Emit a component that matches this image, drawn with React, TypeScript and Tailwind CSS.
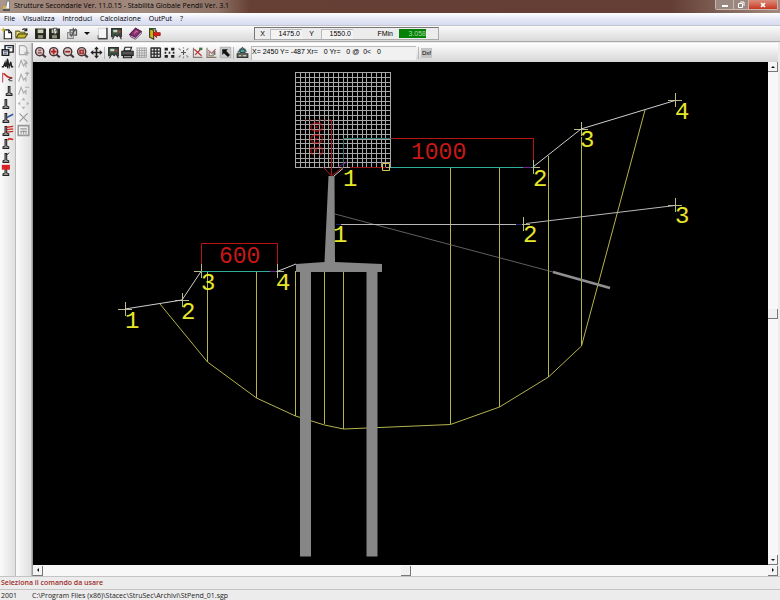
import type { ReactNode } from 'react';

type Tool = { label: string; icon: ReactNode };

const Icon = ({ children }: { children: ReactNode }) => (
  <svg viewBox="0 0 16 16" className="h-[13px] w-[13px] shrink-0" fill="none" stroke="#222" strokeWidth="1.4">
    {children}
  </svg>
);

const ToolButton = ({ tool }: { tool: Tool }) => (
  <button type="button" title={tool.label} aria-label={tool.label} className="flex h-3.5 w-3.5 shrink-0 items-center justify-center">
    <Icon>{tool.icon}</Icon>
  </button>
);

const lens = (color: string, inner: ReactNode) => (
  <>
    <circle cx="7" cy="7" r="5" fill="#d9cfcf" stroke="#4a3438" strokeWidth="1.8" />
    <path d="M10.5 10.5L14.5 14" stroke="#4a3438" strokeWidth="2.6" />
    <g stroke={color} strokeWidth="2.2">{inner}</g>
  </>
);

const disk = (
  <>
    <path d="M2 2.5H14V14H2Z" fill="#26281c" stroke="#26281c" />
    <path d="M4.5 3H11.5V7.5H4.5Z" fill="#c9cdb8" stroke="none" />
    <path d="M5 10H11V14H5Z" fill="#8d9080" stroke="none" />
  </>
);

const camera = (
  <>
    <path d="M2 2H14V12H2Z" fill="#3f5443" stroke="#303030" />
    <path d="M4 3.5H9V6.5H4Z" fill="#c5d7c5" stroke="none" />
    <path d="M10 4.5H13V7H10Z" fill="#b04038" stroke="none" />
    <path d="M3 15L6 9.5L9 12L11 9.5L14 15" stroke="#333" fill="#e7e7e7" />
  </>
);

// retaining wall pictogram shared by the left toolbar
const wall = (
  <path d="M5 3H7V11L9.5 12V14H2.5V12L5 11Z" fill="#b8b8b8" stroke="#222" strokeWidth="1.3" />
);

const fileTools: Tool[] = [
  {
    label: 'Nuovo',
    icon: (
      <>
        <path d="M4 3.5H9.5L13 7V14.5H4Z" fill="#fff" />
        <path d="M9.5 3.5V7H13" />
        <path d="M3 1V6M.5 3.5H5.5" stroke="#c9b13a" />
      </>
    ),
  },
  {
    label: 'Apri',
    icon: (
      <>
        <path d="M1 13V5H5L6.5 6.5H12V9" fill="#e9e08a" stroke="#69621d" />
        <path d="M1.5 13.5L4.5 8.5H15.5L12 13.5Z" fill="#c4b82f" stroke="#4f4a14" />
        <path d="M9 3.5C11 1.5 13 2 14 4M14.5 1.5V4.5H11.5" />
      </>
    ),
  },
];

const saveTools: Tool[] = [
  { label: 'Salva', icon: disk },
  {
    label: 'Salva con nome',
    icon: (
      <>
        {disk}
        <path d="M6.5 1.5H11L9.5 5H12.5L8 10Z" fill="#eee" stroke="#333" strokeWidth="1" />
      </>
    ),
  },
];

const exportTools: Tool[] = [
  {
    label: 'Foglio',
    icon: (
      <>
        <path d="M3 1.5H13V14H3Z" fill="#f5f5f5" stroke="#d5d5d5" />
        <path d="M13.5 1V14.5H2.5" stroke="#444" strokeWidth="1.8" />
        <path d="M2.5 10V14.5" stroke="#777" />
      </>
    ),
  },
  { label: 'Cattura', icon: camera },
];

const book: Tool = {
  label: 'Guida',
  icon: (
    <>
      <path d="M1 9L8 1.5L15 5.5L8 13Z" fill="#8e2f7c" stroke="#541b4c" />
      <path d="M1 9.5L2 12L8 15L15 8V5.5L8 12.8Z" fill="#e8dce6" stroke="#541b4c" strokeWidth="1" />
      <path d="M6.5 8L9 5L10.5 6" stroke="#e7bb55" strokeWidth="1" />
    </>
  ),
};

const exit: Tool = {
  label: 'Esci',
  icon: (
    <>
      <path d="M2 2L7 4V15L2 12.5Z" fill="#c7b91f" stroke="#3c3a1c" />
      <path d="M2 2H9V5" stroke="#2d5a2d" />
      <path d="M6 8.5L10.5 4.5V7H15V10.5H10.5V13Z" fill="#dc2018" stroke="#8d1610" strokeWidth="1" />
    </>
  ),
};

const zoomTools: Tool[] = [
  { label: 'Zoom finestra', icon: lens('#a06060', <path d="M4.5 8.5H9.5M5 5.5H9" />) },
  { label: 'Zoom avanti', icon: lens('#c01818', <path d="M3.5 7H10.5M7 3.5V10.5" />) },
  { label: 'Zoom indietro', icon: lens('#a32525', <path d="M4 7H10" />) },
  { label: 'Zoom tutto', icon: lens('#a33', <path d="M5 5.5H9V9H5Z" />) },
];

const pan: Tool = {
  label: 'Sposta vista',
  icon: (
    <>
      <path d="M8 3V13M3 8H13" strokeWidth="2" />
      <path d="M8 .5L11 4H5ZM8 15.5L5 12H11ZM.5 8L4 5V11ZM15.5 8L12 11V5Z" fill="#222" stroke="none" />
    </>
  ),
};

const viewTools: Tool[] = [
  { label: 'Salva immagine', icon: camera },
  {
    label: 'Stampa',
    icon: (
      <>
        <path d="M5 1.5H13L11.5 6H3.5Z" fill="#eee" />
        <path d="M1 6.5H15V11.5H1Z" fill="#555" />
        <path d="M3 11.5H13V14.5H3Z" fill="#999" />
      </>
    ),
  },
  {
    label: 'Griglia',
    icon: <path d="M2 2.5H14M2 5.5H14M2 8.5H14M2 11.5H14M2.5 2V14M5.5 2V14M8.5 2V14M11.5 2V14M14 2V14M2 14H14" stroke="#9a9a9a" strokeWidth="1" />,
  },
  {
    label: 'Griglia attiva',
    icon: <path d="M2 2.5H14M2 6.3H14M2 10H14M2 14H14M2.5 2V14M6.3 2V14M10 2V14M14 2V14" stroke="#2b2b2b" strokeWidth="1.7" />,
  },
  {
    label: 'Snap',
    icon: (
      <>
        <path d="M2 2H6V5.5H2ZM10 2H14V5.5H10ZM2 11H6V14.5H2ZM10 11H14V14.5H10Z" fill="#222" stroke="none" />
        <path d="M2 7H4V9.5H2ZM7 7H9V9.5H7ZM12 7H14V9.5H12Z" fill="#222" stroke="none" />
      </>
    ),
  },
  {
    label: 'Punto',
    icon: (
      <>
        <path d="M8 5V11M5 8H11" stroke="#555" />
        <path d="M2 3L4.5 5.5M14 3L11.5 5.5M2 14L4.5 11.5M14 14L11.5 11.5M8 1.5V3M8 13V15" stroke="#888" />
      </>
    ),
  },
  {
    label: 'Assi',
    icon: (
      <>
        <path d="M3 2V14H14" stroke="#8a7a7a" />
        <path d="M4 4L13 12M12 4L5 11" stroke="#b33" />
        <path d="M10 2H14V5H10Z" fill="#387a3e" stroke="none" />
      </>
    ),
  },
  {
    label: 'Quote',
    icon: (
      <>
        <path d="M2.5 2V14H14M5 7V12H10V7" stroke="#887a66" />
        <path d="M4 5L8 9L13 4" stroke="#a66" />
        <path d="M12 6V11" stroke="#555" />
      </>
    ),
  },
  {
    label: 'Seleziona',
    icon: (
      <>
        <path d="M1.5 1.5H14.5V14.5H1.5Z" fill="#c9c9c9" stroke="#aaa" strokeWidth="1" />
        <path d="M4 4H11L9 6L13.5 11L11 13.5L6 9L4 11Z" fill="#111" stroke="none" />
      </>
    ),
  },
];

const world: Tool = {
  label: 'Coordinate',
  icon: (
    <>
      <path d="M2 8L8 2L13 7" stroke="#456" />
      <path d="M5 4H11V8H5Z" fill="#55a090" stroke="#264d50" />
      <path d="M1.5 9.5H14.5V14H1.5Z" fill="#776" stroke="#333" />
      <path d="M4 12H6M9 12H12" stroke="#eee" />
    </>
  ),
};

const wallTools: Tool[] = [
  {
    label: 'Proprietà',
    icon: (
      <>
        <path d="M5 2H15V10H5Z" fill="#fff" strokeWidth="1.8" />
        <path d="M1.5 7H9.5V14H1.5Z" fill="#ddd" strokeWidth="1.8" />
        <path d="M3.5 9.5H8M3.5 12H7M8 4.5H13" stroke="#3b5980" />
      </>
    ),
  },
  {
    label: 'Profilo terreno',
    icon: (
      <>
        <path d="M1 12H3L5 7L6 12L8 3L10 12L12 6L13 12H15" strokeWidth="1.8" />
        <path d="M8 2V14" />
      </>
    ),
  },
  {
    label: 'Strati',
    icon: (
      <>
        <path d="M3 3L8 7L14 9" stroke="#c92a20" strokeWidth="2" />
        <path d="M2 2V14" stroke="#b56" />
        <path d="M9 11L13 8M10 12L14 12" stroke="#444" />
      </>
    ),
  },
  { label: 'Muro con pali', icon: <g transform="translate(4 0)">{wall}</g> },
  { label: 'Muro', icon: wall },
  {
    label: 'Falda',
    icon: (
      <>
        {wall}
        <path d="M7 8L15 4" stroke="#3557a3" strokeWidth="1.8" />
      </>
    ),
  },
  {
    label: 'Carichi',
    icon: (
      <>
        {wall}
        <path d="M7 4L15 3M7 7L15 6M7 10L15 9" stroke="#cb2a22" strokeWidth="1.6" />
      </>
    ),
  },
  {
    label: 'Tiranti',
    icon: (
      <>
        {wall}
        <path d="M8 4L10 2L15 3" stroke="#d22a22" strokeWidth="2" />
      </>
    ),
  },
  {
    label: 'Punti',
    icon: (
      <>
        {wall}
        <path d="M7 5L10 2" strokeWidth="1.2" />
      </>
    ),
  },
  {
    label: 'Sovraccarico',
    icon: (
      <>
        {wall}
        <path d="M1 1H11V7H1Z" fill="#dc2026" stroke="none" />
      </>
    ),
  },
];

const editTools: Tool[] = [
  {
    label: 'Aggiungi',
    icon: (
      <g stroke="#aaa">
        <path d="M3 2H9L12 5V13H3Z" />
        <path d="M9 11H15M12 8V14" strokeWidth="2" />
      </g>
    ),
  },
  { label: 'Modifica nodo', icon: <path d="M2 13L5 4L8 11L11 6V13M8 3L13 8" stroke="#aaa" /> },
  { label: 'Inserisci nodo', icon: <path d="M2 13L5 4L8 11L11 8V13M10 3H15M12.5 1V6" stroke="#aaa" /> },
  { label: 'Elimina nodo', icon: <path d="M2 13L5 4L8 11L11 8V13M10 4H15" stroke="#aaa" /> },
  {
    label: 'Muovi',
    icon: <path d="M8 1L10.5 4H5.5ZM8 15L5.5 12H10.5ZM1 8L4 5.5V10.5ZM15 8L12 10.5V5.5Z" fill="#b3b3b3" stroke="none" />,
  },
  { label: 'Cancella', icon: <path d="M3 3L13 13M13 3L3 13" stroke="#999" /> },
  {
    label: 'Tabella',
    icon: (
      <g stroke="#999">
        <path d="M1.5 2H14.5V14H1.5Z" strokeWidth="2" />
        <path d="M4 6H12M4 9H12M5 12V9M8 12V8M11 12V9" />
      </g>
    ),
  },
];

const Separator = () => <div className="h-3 w-px shrink-0 bg-[#b5b5b5]" />;

const menu = ['File', 'Visualizza', 'Introduci', 'Calcolazione', 'OutPut', '?'];

const TitleBar = () => (
  <header className="flex h-[13px] shrink-0 items-start justify-between bg-[linear-gradient(90deg,#aa968b_0%,#96786c_10%,#a28c80_18%,#8d7164_28%,#664035_32%,#643e34_86%,#86695f_94%,#a58a80_100%)]">
    <div className="flex h-3 items-center gap-0.5 pl-0.5">
      <svg viewBox="0 0 10 12" className="h-3 w-2.5">
        <path d="M1 9H8V11H1Z" fill="#555" />
        <path d="M5 1H7.5V9H3.5Z" fill="#f4f4f4" stroke="#666" strokeWidth=".7" />
        <path d="M1 6H4V9H1Z" fill="#d3b247" />
      </svg>
      <h1 className="text-[7px] leading-3 whitespace-nowrap text-black">
        Strutture Secondarie Ver. 11.0.15 - Stabilità Globale Pendii Ver. 3.1
      </h1>
    </div>
    <div className="mr-0.5 flex h-2.5 overflow-hidden rounded-b-xs border border-t-0 border-[#c9b7b0]">
      <button type="button" aria-label="Riduci a icona" className="flex w-[18px] items-end justify-center border-r border-[#c9b7b0] bg-[#9a8880] pb-0.5">
        <span className="h-0.5 w-1.5 bg-white" />
      </button>
      <button type="button" aria-label="Ripristina" className="flex w-[15px] items-center justify-center border-r border-[#c9b7b0] bg-[#9a8880]">
        <svg viewBox="0 0 8 8" className="h-2 w-2" fill="none" stroke="#fff">
          <path d="M1.5 2.5H5.5V6.5H1.5ZM3 1H7V5" />
        </svg>
      </button>
      <button type="button" aria-label="Chiudi" className="flex w-[28px] items-center justify-center bg-linear-to-b from-[#d98b7b] to-[#c8341c]">
        <svg viewBox="0 0 8 8" className="h-2 w-2" stroke="#fff" strokeWidth="1.6">
          <path d="M2 2L6 6M6 2L2 6" />
        </svg>
      </button>
    </div>
  </header>
);

const MenuBar = () => (
  <nav className="flex h-[13px] shrink-0 items-center gap-2 border-b border-[#c3c3c8] bg-linear-to-b from-white via-[#e4e7f5] to-[#d7dcf1] pl-1 text-[7px] leading-3 text-black">
    {menu.map((item) => (
      <button key={item} type="button">{item}</button>
    ))}
  </nav>
);

const Readout = () => (
  <div className="flex h-[13px] w-[185px] shrink-0 items-center border border-[#aaa] border-t-[#777] border-l-[#777] bg-[#ececec] font-['Liberation_Sans',sans-serif] text-[7px] leading-[10px]">
    <label htmlFor="coord-x" className="w-[15px] text-center">X</label>
    <input id="coord-x" readOnly value="1475.0" className="h-2.5 w-8 border-t border-l border-[#bbb] bg-[#f3f3f3] pr-0.5 text-right" />
    <label htmlFor="coord-y" className="w-[19px] text-center">Y</label>
    <input id="coord-y" readOnly value="1550.0" className="h-2.5 w-8 border-t border-l border-[#bbb] bg-[#f3f3f3] pr-0.5 text-right" />
    <label htmlFor="fmin" className="w-[46px] pr-1.5 text-right">FMin</label>
    <input id="fmin" readOnly value="3.058" className="h-[9px] w-[27px] bg-[#058205] text-right text-[#a8dca8]" />
  </div>
);

const FileToolbar = () => (
  <div className="flex h-4 shrink-0 items-center border-b border-[#a9a9a9] bg-linear-to-b from-[#fafafa] to-[#dadada]">
    <div className="flex w-[254px] shrink-0 items-center gap-[5px]">
      <div className="flex">{fileTools.map((t) => <ToolButton key={t.label} tool={t} />)}</div>
      <div className="flex">{saveTools.map((t) => <ToolButton key={t.label} tool={t} />)}</div>
      <button type="button" aria-label="Opzioni" className="flex w-6 items-center justify-between">
        <Icon>
          <path d="M5 3.5H13V10H5Z" fill="#ccc" stroke="#555" />
          <path d="M2 7H9V14H2Z" stroke="#888" />
          <path d="M9 1V9M12 2L6 12" stroke="#555" />
        </Icon>
        <svg viewBox="0 0 6 3" className="h-[3px] w-1.5"><path d="M0 0H6L3 3Z" fill="#111" /></svg>
      </button>
      <div className="flex">{exportTools.map((t) => <ToolButton key={t.label} tool={t} />)}</div>
      <ToolButton tool={book} />
      <ToolButton tool={exit} />
    </div>
    <Readout />
  </div>
);

const ViewToolbar = () => (
  <div className="flex h-[19px] shrink-0 items-center bg-linear-to-b from-white to-[#d6d6d6]">
    <div className="flex items-center">
      {zoomTools.map((t) => <ToolButton key={t.label} tool={t} />)}
      <ToolButton tool={pan} />
      <div className="mx-px flex"><Separator /></div>
      {viewTools.map((t) => <ToolButton key={t.label} tool={t} />)}
      <div className="mx-px flex"><Separator /></div>
      <ToolButton tool={world} />
    </div>
    <output className="ml-0.5 h-3.5 w-[165px] shrink-0 border-t border-l border-[#bbb] bg-[#f1f1f1] font-['Liberation_Sans',sans-serif] text-[7px] leading-[9px] whitespace-pre">
      {'X= 2450 Y= -487 Xr=   0 Yr=   0 @  0<   0'}
    </output>
    <div className="mx-0.5 flex"><Separator /></div>
    <button type="button" className="h-2.5 w-[11px] bg-[#c4c4c4] font-['Liberation_Sans',sans-serif] text-[6px] leading-[10px] text-black">Dxf</button>
  </div>
);

const SideToolbar = ({ tools }: { tools: Tool[] }) => (
  <div className="flex w-4 shrink-0 flex-col items-center border-r border-[#bcbcbc] bg-linear-to-r from-[#fbfbfb] to-[#e0e0e0] pt-px">
    {tools.map((t) => (
      <div key={t.label} className="flex h-[13px] items-center nth-[3n]:h-3.5">
        <ToolButton tool={t} />
      </div>
    ))}
  </div>
);

const crosses = [
  [533, 167], [581, 129], [675, 100], [523, 224], [675, 205],
  [125, 309], [182, 300], [201, 271], [277, 271],
];

const nodeLabels: [string, number, number][] = [
  ['1', 343, 186], ['2', 533, 186], ['3', 580, 147], ['4', 675, 119],
  ['1', 333, 242], ['2', 523, 242], ['3', 675, 223],
  ['1', 125, 328], ['2', 181, 319], ['3', 201, 290], ['4', 276, 290],
];

const slices = [
  [207, 271, 362], [256, 271, 398], [295, 271, 416], [324, 271, 424], [343, 271, 429],
  [450, 167, 424], [499, 167, 407], [548, 156, 377], [581, 137, 346],
];

const gridSteps = Array.from({ length: 21 }, (_, i) => Math.round(i * 4.75));

const SlopeDrawing = () => (
  <svg viewBox="33 62 735 503" preserveAspectRatio="xMinYMin meet" className="h-full w-full" fill="none">
    {/* Slip surface */}
    <g stroke="#b4b44e">
      {slices.map(([x, top, bottom]) => (
        <path key={x} d={`M${x + 0.5} ${top}V${bottom}`} />
      ))}
      <path d="M160 304L207.5 362L256.5 398L295.5 416L324.5 425L343.5 429L450.5 424.5L499.5 407L548.5 377L581.5 346L645 110" />
    </g>

    {/* Wall, cap and piles */}
    <path d="M328.5 176H334.5L335 262L382 264V272H377.5V556.5H366.5V272H311V556.5H300V272H296V264L324.5 262Z" fill="#868686" />

    {/* Tie rod */}
    <path d="M335 214L553 272" stroke="#777" strokeWidth=".8" />
    <path d="M553 272L610 288" stroke="#909090" strokeWidth="2.5" />

    {/* Surcharges */}
    <path d="M391 138.5H533.5V160M201.5 265V243.5H277.5V265" stroke="#b81414" />
    <path d="M533.5 160V167M201.5 265V271M277.5 265V271" stroke="#1d7a2c" />

    <g stroke="#bcb98a">
      {crosses.map(([x, y]) => (
        <path key={`${x}-${y}`} d={`M${x - 7} ${y + 0.5}H${x + 7}M${x + 0.5} ${y - 7}V${y + 7}`} />
      ))}
    </g>

    {/* Ground profiles */}
    <path d="M533 167L581 129L675 100.5M125 309L182 300L201 271.5M277 271.5L296 264M334 176L343 168.5" stroke="#cfcfcf" />
    <path d="M341 224.5H516M526 223.5L675 205.5" stroke="#b9b9b9" />
    <path d="M386 167.5H533M201 271.5H277" stroke="#2fae98" />
    <path d="M523 167.5H531M270 271.5H276" stroke="#7c1f8c" />
    <path d="M516 224.5H522M336 224.5H341" stroke="#23237c" />

    {/* Search grid */}
    <g stroke="#a8a8a8" shapeRendering="crispEdges">
      {gridSteps.map((s) => (
        <path key={s} d={`M${295.5 + s} 72V167M295 ${72.5 + s}H391`} />
      ))}
    </g>
    <path d="M343.5 167V138.5H391" stroke="#2b7770" />
    <path d="M331.5 120V175M323 167L331.5 176L343 167" stroke="#b01c1c" />
    <path d="M331 120H305" stroke="#a32424" strokeDasharray="2 3" />
    <path d="M350 167.5H386" stroke="#9b1717" />
    <path d="M338 167L347 162" stroke="#7c1f8c" />
    <path d="M382.5 163.5H389.5V170.5H382.5Z" stroke="#d8c64f" />

    <g fontFamily="'Liberation Mono', monospace">
      <g fill="#c81818" fontSize="23">
        <text x="411" y="159">1000</text>
        <text x="219" y="263">600</text>
        <text transform="translate(323 157) rotate(-90)" fontSize="20" fillOpacity=".6">300</text>
      </g>
      <g fill="#e6e62a" fontSize="24">
        {nodeLabels.map(([text, x, y]) => (
          <text key={`${x}-${y}`} x={x} y={y}>{text}</text>
        ))}
      </g>
    </g>
  </svg>
);

const ScrollButton = ({ label, path }: { label: string; path: string }) => (
  <button type="button" aria-label={label} className="flex h-2.5 w-2.5 shrink-0 items-center justify-center border-r border-b border-[#777] bg-[#f4f4f4]">
    <svg viewBox="0 0 6 6" className="h-1.5 w-1.5"><path d={path} fill="#111" /></svg>
  </button>
);

const Thumb = () => <div className="h-2.5 w-2.5 shrink-0 border-r border-b border-[#777] bg-[#f0f0f0]" />;

const Workspace = () => (
  <main className="flex min-h-0 min-w-0 flex-1 flex-col">
    <ViewToolbar />
    <div className="flex min-h-0 flex-1">
      <div className="min-w-0 flex-1 bg-black">
        <SlopeDrawing />
      </div>
      <div className="flex w-2.5 shrink-0 flex-col items-center justify-between bg-[#f7f7f7]">
        <ScrollButton label="Scorri su" path="M1 4L3 2L5 4Z" />
        <Thumb />
        <ScrollButton label="Scorri giù" path="M1 2L3 4L5 2Z" />
      </div>
    </div>
    <div className="flex h-[11px] shrink-0 items-center justify-between bg-[#f7f7f7]">
      <ScrollButton label="Scorri a sinistra" path="M4 1L2 3L4 5Z" />
      <Thumb />
      <ScrollButton label="Scorri a destra" path="M2 1L4 3L2 5Z" />
    </div>
  </main>
);

const App = () => (
  <div className="flex h-screen flex-col overflow-hidden bg-[#ececec] font-['Open_Sans','Noto_Sans',sans-serif]">
    <TitleBar />
    <MenuBar />
    <FileToolbar />
    <div className="flex min-h-0 flex-1 pt-px pr-0.5">
      <SideToolbar tools={wallTools} />
      <SideToolbar tools={editTools} />
      <div className="w-px shrink-0 bg-[#999]" />
      <Workspace />
    </div>
    <footer className="shrink-0 text-[7px] leading-[11px]">
      <p className="h-[13px] border-t border-[#c4c4c4] pl-px font-semibold text-[#9c2a2a]">Seleziona il comando da usare</p>
      <div className="flex h-[11px] border-t border-[#c4c4c4] text-[#222]">
        <span className="w-8 pl-px">2001</span>
        <span>C:\Program Files (x86)\Stacec\StruSec\Archivi\StPend_01.sgp</span>
      </div>
    </footer>
  </div>
);

export default App;
